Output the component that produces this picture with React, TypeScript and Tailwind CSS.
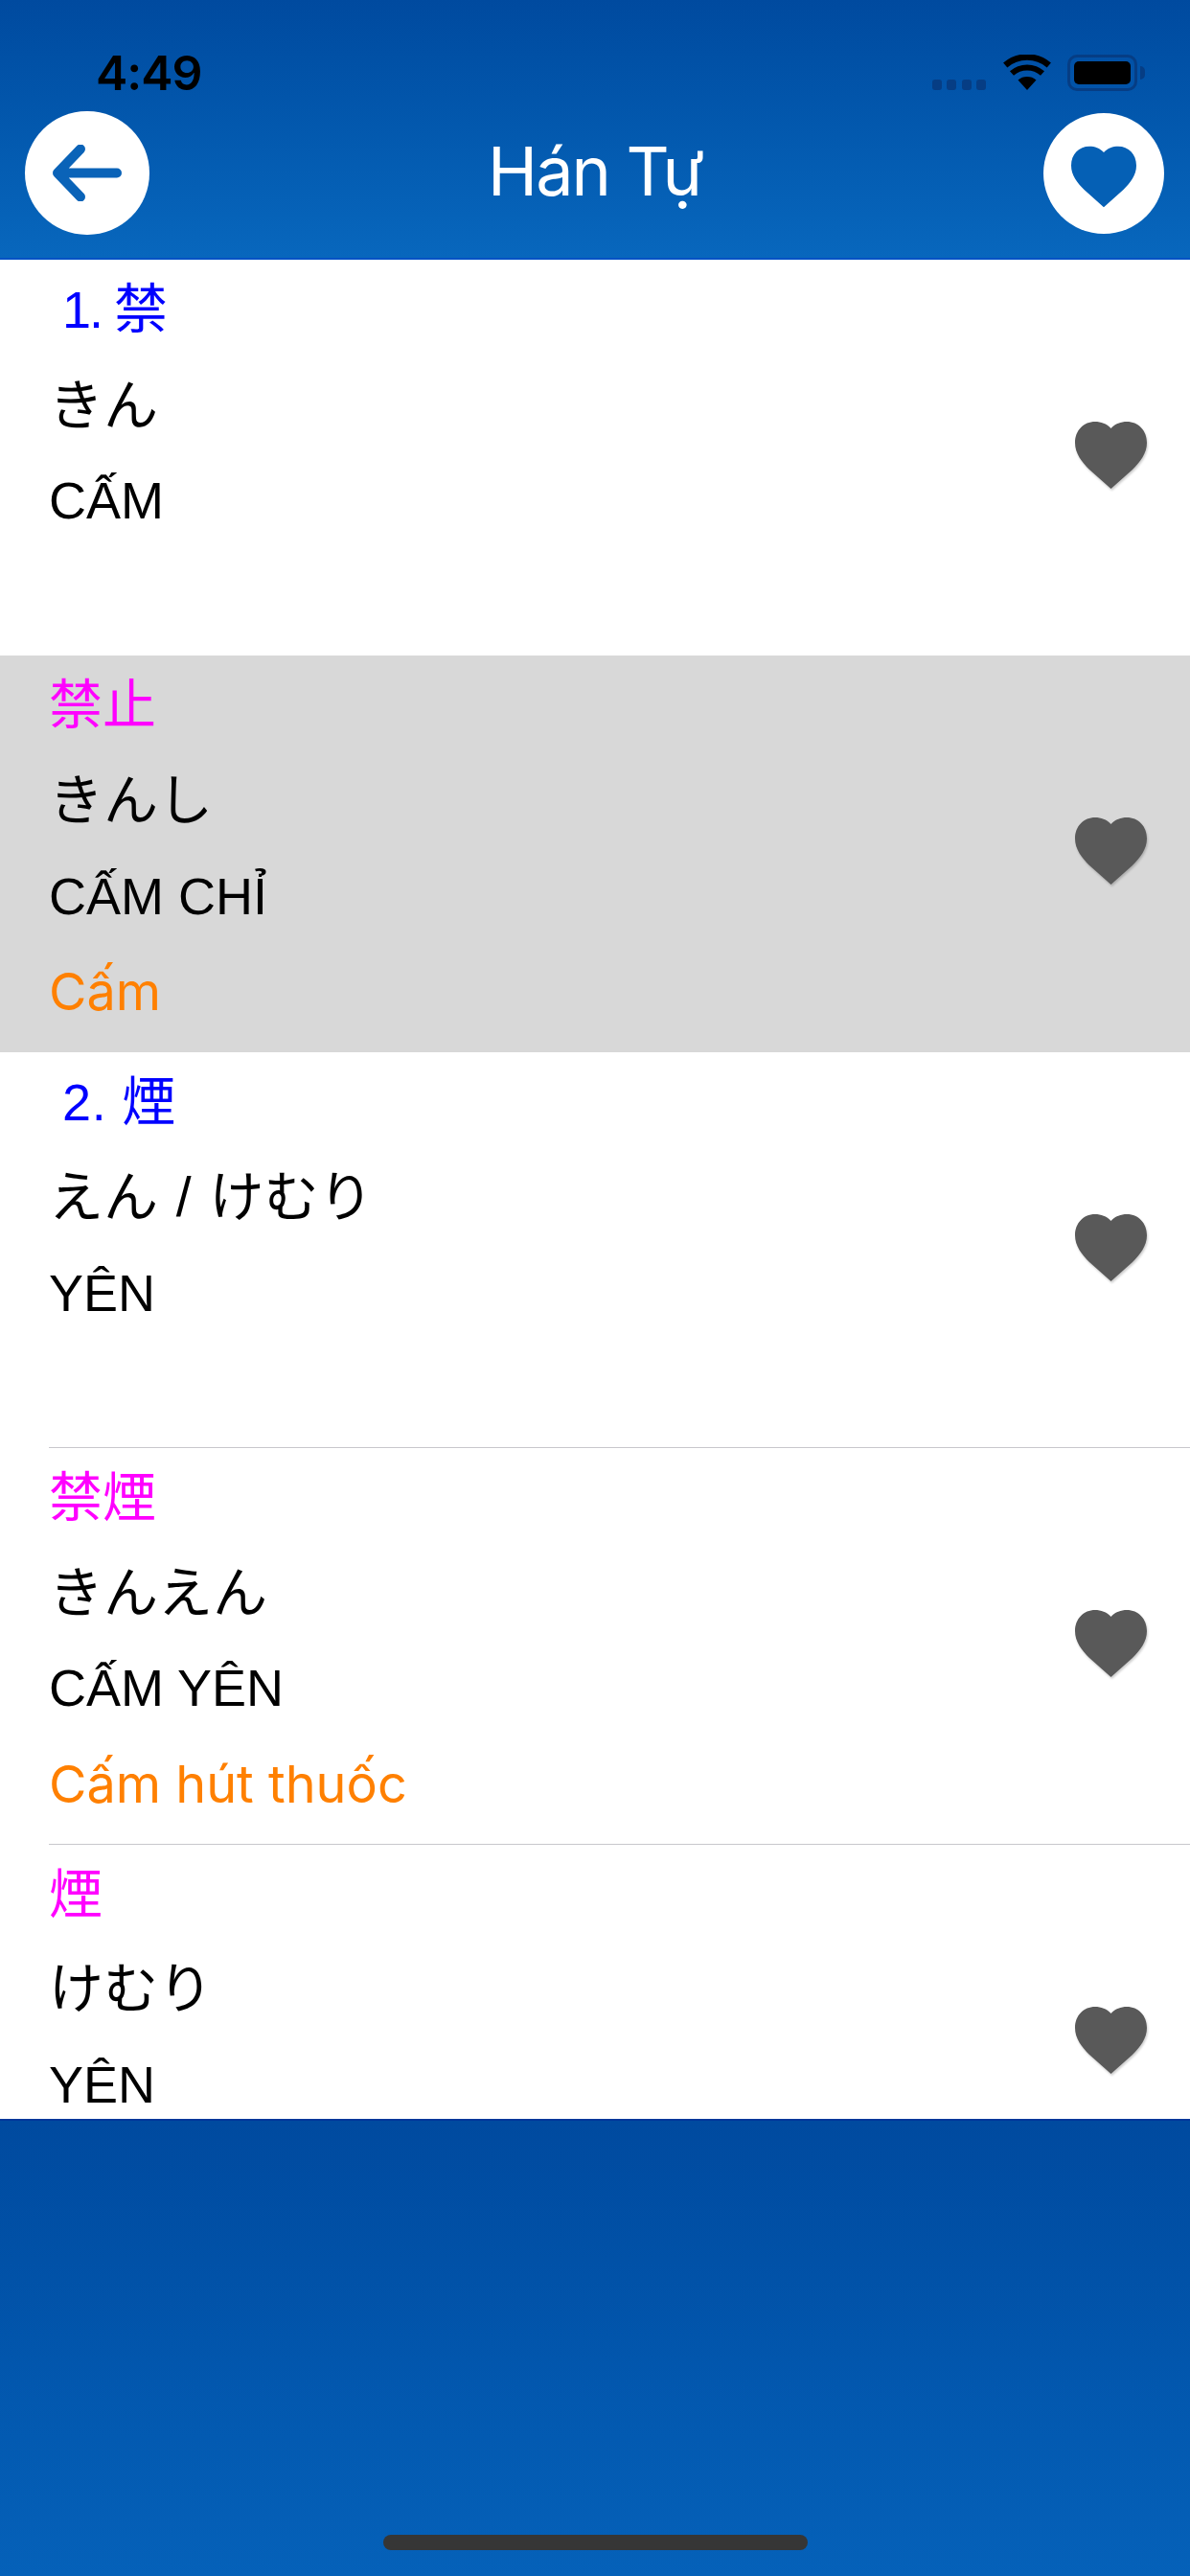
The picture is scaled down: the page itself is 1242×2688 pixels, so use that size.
const HEART = "M37.5 7C33 2 27 0 21 0 9 0 0 9 0 22c0 11 7 20 15 28l22.5 20L60 50c8-8 15-17 15-28C75 9 66 0 54 0 48 0 42 2 37.5 7Z";

type Row = {
  num?: string;
  numClass?: string;
  head: string;
  reading: string;
  meaning: string;
  note?: string;
  selected?: boolean;
  separator?: boolean;
};

const rows: Row[] = [
  { num: "1.", numClass: "-tracking-[2px]", head: "禁", reading: "きん", meaning: "CẤM" },
  { head: "禁止", reading: "きんし", meaning: "CẤM CHỈ", note: "Cấm", selected: true },
  { num: "2.", numClass: "tracking-[0.7px]", head: "煙", reading: "えん / けむり", meaning: "YÊN", separator: true },
  { head: "禁煙", reading: "きんえん", meaning: "CẤM YÊN", note: "Cấm hút thuốc", separator: true },
  { head: "煙", reading: "けむり", meaning: "YÊN" },
];

function ListRow({ row }: { row: Row }) {
  return (
    <div className={`relative h-[413.4px] shrink-0 flex items-start justify-between pl-[51px] pr-[45px] pt-[2px] ${row.selected ? "bg-[#d8d8d8]" : "bg-white"}`}>
      <div className="flex flex-col text-[54px] leading-[99.6px] text-black whitespace-pre">
        {row.num ? (
          <div className="text-[#0000ff] pl-[14px]">
            <span className={row.numClass}>{row.num} </span>
            <span className="text-[56px]">{row.head}</span>
          </div>
        ) : (
          <div className="text-[#ff00ff] text-[56px]">{row.head}</div>
        )}
        <div className="text-[57px] [word-spacing:3px]">{row.reading}</div>
        <div>{row.meaning}</div>
        {row.note ? <div className="font-['Inter',sans-serif] text-[#ff8000]">{row.note}</div> : null}
      </div>
      <svg viewBox="0 0 75 70" className="w-[75px] h-[70px] mt-[167px] shrink-0 drop-shadow-[1px_2px_1px_rgba(0,0,0,0.2)]">
        <path d={HEART} fill="#595959" />
      </svg>
      {row.separator ? <div className="absolute left-[51px] right-0 bottom-0 h-[1px] bg-[#c8c7cc]" /> : null}
    </div>
  );
}

export default function App() {
  return (
    <div className="w-[1242px] h-[2688px] flex flex-col overflow-hidden font-['Liberation_Sans','Noto_Sans_CJK_JP',sans-serif]">
      <header className="h-[271px] shrink-0 flex flex-col bg-gradient-to-b from-[#004a9f] to-[#0867bd] border-b-2 border-[#0052c4]">
        <div className="h-[116px] shrink-0 flex items-start justify-between pl-[100px] pr-[47px] pt-[50px]">
          <span className="font-['Inter',sans-serif] font-semibold text-[50px] leading-[52px] text-black -tracking-[1px]">4:49</span>
          <div className="flex items-start">
            <div className="flex gap-[5.5px] mt-[33px] mr-[18px]">
              <span className="w-[10px] h-[11px] rounded-[3px] bg-[#063d84]" />
              <span className="w-[10px] h-[11px] rounded-[3px] bg-[#063d84]" />
              <span className="w-[10px] h-[11px] rounded-[3px] bg-[#063d84]" />
              <span className="w-[10px] h-[11px] rounded-[3px] bg-[#063d84]" />
            </div>
            <svg viewBox="0 0 50 37" className="w-[50px] h-[37px] mt-[7px] mr-[17px]">
              <path d="M25 37 15.5 26.5a15 15 0 0 1 19 0Z" fill="#000" />
              <path d="M9 19.5a24 24 0 0 1 32 0" fill="none" stroke="#000" strokeWidth="6" />
              <path d="M2.2 11a35 35 0 0 1 45.6 0" fill="none" stroke="#000" strokeWidth="6.5" />
            </svg>
            <div className="flex items-center mt-[7px]">
              <div className="w-[73px] h-[38px] rounded-[10px] border-[3px] border-[#063d84] p-[4px]">
                <div className="w-full h-full rounded-[5px] bg-black" />
              </div>
              <span className="w-[5px] h-[14px] ml-[3px] rounded-r-[5px] bg-[#063d84]" />
            </div>
          </div>
        </div>
        <div className="relative flex items-center justify-between pl-[26px] pr-[27px] h-[129px]">
          <button className="w-[130px] h-[129px] rounded-full bg-white flex items-center justify-center">
            <svg viewBox="0 0 72 59" className="w-[72px] h-[59px]">
              <path d="M5 29.5h62M29 4.5 5 29.5l24 25" fill="none" stroke="#0a63b8" strokeWidth="10" strokeLinecap="round" strokeLinejoin="round" />
            </svg>
          </button>
          <h1 className="absolute inset-x-0 top-0 text-center font-['Inter',sans-serif] font-normal text-[70px] leading-[125px] text-white -tracking-[2px] pointer-events-none">Hán Tự</h1>
          <button className="w-[126px] h-[126px] rounded-full bg-white flex items-center justify-center">
            <svg viewBox="0 0 75 70" className="w-[68px] h-[65px] mt-[7px]">
              <path d={HEART} fill="#0560b5" />
            </svg>
          </button>
        </div>
      </header>
      <main className="h-[1940px] shrink-0 flex flex-col overflow-hidden bg-white">
        {rows.map((row, i) => (
          <ListRow key={i} row={row} />
        ))}
      </main>
      <footer className="flex-1 flex items-end justify-center pb-[27px] bg-gradient-to-b from-[#004a9f] to-[#0561b9] border-t-2 border-[#00379a]">
        <div className="w-[443px] h-[16px] rounded-[8px] bg-[#363636]" />
      </footer>
    </div>
  );
}
